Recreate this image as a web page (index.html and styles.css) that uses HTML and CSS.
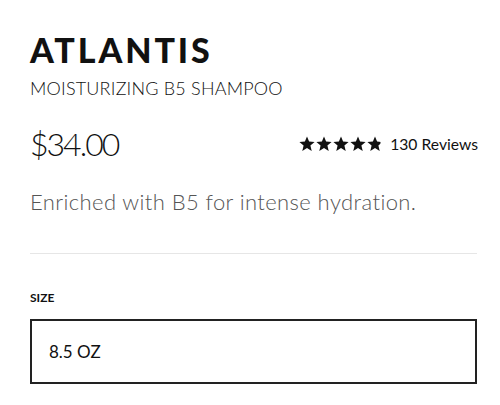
FILE: index.html
```html
<!DOCTYPE html>
<html>
<head>
<meta charset="utf-8">
<link rel="stylesheet" href="styles.css">
</head>
<body>
<div class="product">
  <h1 class="brand">ATLANTIS</h1>
  <div class="name">MOISTURIZING B5 SHAMPOO</div>
  <div class="price-row">
    <div class="price">$34.00</div>
    <div class="rating">
      <svg class="stars" width="82" height="16" viewBox="0 0 82 16">
        <defs>
          <path id="s" d="M8 0.5 L10.1 5.6 L15.6 6 L11.4 9.6 L12.7 15 L8 12.1 L3.3 15 L4.6 9.6 L0.4 6 L5.9 5.6 Z"/>
          <clipPath id="part"><rect x="0" y="0" width="13.5" height="16"/></clipPath>
        </defs>
        <use href="#s" x="0" fill="#111"/>
        <use href="#s" x="17" fill="#111"/>
        <use href="#s" x="34" fill="#111"/>
        <use href="#s" x="51" fill="#111"/>
        <g transform="translate(68 0)">
          <path d="M8 0.5 L10.1 5.6 L15.6 6 L11.4 9.6 L12.7 15 L8 12.1 L3.3 15 L4.6 9.6 L0.4 6 L5.9 5.6 Z" fill="#111" clip-path="url(#part)"/>
        </g>
      </svg>
      <span class="reviews">130 Reviews</span>
    </div>
  </div>
  <p class="desc">Enriched with B5 for intense hydration.</p>
  <hr class="divider">
  <div class="size-label">SIZE</div>
  <div class="size-box">8.5 OZ</div>
</div>
</body>
</html>
```

FILE: styles.css
```css
html, body {
  margin: 0;
  padding: 0;
  background: #fff;
}
body {
  font-family: "Lato", "Open Sans", sans-serif;
  color: #111;
}
.product {
  padding: 33px 23px 0 30px;
}
.brand {
  margin: 0;
  font-family: "Lato", sans-serif;
  font-weight: 900;
  font-size: 34px;
  line-height: 34px;
  letter-spacing: 2.9px;
}
.name {
  margin-top: 11px;
  font-size: 18px;
  line-height: 20px;
  font-weight: 300;
  letter-spacing: 0.2px;
}
.price-row {
  display: flex;
  justify-content: space-between;
  align-items: center;
  margin-top: 26px;
}
.price {
  font-size: 32px;
  font-weight: 300;
  line-height: 40px;
  letter-spacing: -2px;
}
.rating {
  display: flex;
  align-items: center;
  gap: 9px;
  margin-right: -1px;
}
.stars {
  display: block;
}
.reviews {
  font-size: 15.7px;
  font-weight: 400;
}
.desc {
  margin: 24px 0 0;
  font-size: 22px;
  line-height: 28px;
  font-weight: 300;
  letter-spacing: 0.4px;
  color: #555;
}
.divider {
  margin: 37px 0 0;
  border: 0;
  border-top: 1px solid #e6e6e6;
  height: 0;
}
.size-label {
  margin-top: 36px;
  font-size: 12px;
  font-weight: 700;
  line-height: 16px;
}
.size-box {
  margin-top: 13px;
  border: 2px solid #222;
  display: flex;
  align-items: center;
  padding-left: 17px;
  font-size: 17px;
  box-sizing: border-box;
  height: 65px;
}
```
